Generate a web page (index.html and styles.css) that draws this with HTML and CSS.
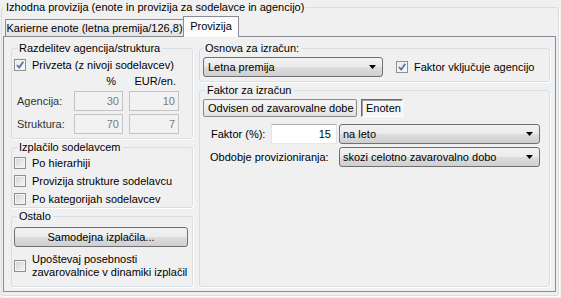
FILE: index.html
```html
<!DOCTYPE html>
<html lang="sl">
<head>
    <meta charset="UTF-8">
    <title>Izhodna provizija</title>
    <link rel="stylesheet" href="styles.css">
</head>
<body>
    <fieldset class="group outer">
        <legend>Izhodna provizija (enote in provizija za sodelavce in agencijo)</legend>
        <div class="tabctl">
            <div class="tabstrip">
                <div class="tab">Karierne enote (letna premija/126,8)</div>
                <div class="tab active">Provizija</div>
            </div>
            <div class="tabpage">
                <div class="col left">
                    <fieldset class="group split">
                        <legend>Razdelitev agencija/struktura</legend>
                        <div class="cbrow">
                            <span class="cb on"><svg viewBox="0 0 10 10" width="10" height="10"><path d="M2 5l2.2 2.6L8.3 1.8" fill="none" stroke="#5a6ea5" stroke-width="1.7"/></svg></span>
                            Privzeta (z nivoji sodelavcev)
                        </div>
                        <div class="grid">
                            <span></span>
                            <span class="head pct">%</span>
                            <span class="head eur">EUR/en.</span>
                            <span class="lbl">Agencija:</span>
                            <div class="edit dis">30</div>
                            <div class="edit dis">10</div>
                            <span class="lbl">Struktura:</span>
                            <div class="edit dis">70</div>
                            <div class="edit dis">7</div>
                        </div>
                    </fieldset>
                    <fieldset class="group payout">
                        <legend>Izplačilo sodelavcem</legend>
                        <div class="cbrow"><span class="cb"></span>Po hierarhiji</div>
                        <div class="cbrow"><span class="cb"></span>Provizija strukture sodelavcu</div>
                        <div class="cbrow"><span class="cb"></span>Po kategorijah sodelavcev</div>
                    </fieldset>
                    <fieldset class="group other">
                        <legend>Ostalo</legend>
                        <div class="button">Samodejna izplačila...</div>
                        <div class="cbrow multi">
                            <span class="cb"></span>
                            <span>Upoštevaj posebnosti<br>zavarovalnice v dinamiki izplačil</span>
                        </div>
                    </fieldset>
                </div>
                <div class="col right">
                    <fieldset class="group basis">
                        <legend>Osnova za izračun:</legend>
                        <div class="basis-row">
                            <div class="combo wide">
                                <span>Letna premija</span>
                                <svg width="7" height="4" viewBox="0 0 7 4"><path d="M0 0h7L3.5 4z"/></svg>
                            </div>
                            <div class="cbrow">
                                <span class="cb on"><svg viewBox="0 0 10 10" width="10" height="10"><path d="M2 5l2.2 2.6L8.3 1.8" fill="none" stroke="#5a6ea5" stroke-width="1.7"/></svg></span>
                                Faktor vključuje agencijo
                            </div>
                        </div>
                    </fieldset>
                    <fieldset class="group factor">
                        <legend>Faktor za izračun</legend>
                        <div class="btabs">
                            <div class="btab">Odvisen od zavarovalne dobe</div>
                            <div class="btab on">Enoten</div>
                        </div>
                        <div class="form">
                            <span class="flbl">Faktor (%):</span>
                            <div class="edit num">15</div>
                            <div class="combo">
                                <span>na leto</span>
                                <svg width="7" height="4" viewBox="0 0 7 4"><path d="M0 0h7L3.5 4z"/></svg>
                            </div>
                            <span class="flbl span2">Obdobje provizioniranja:</span>
                            <div class="combo">
                                <span>skozi celotno zavarovalno dobo</span>
                                <svg width="7" height="4" viewBox="0 0 7 4"><path d="M0 0h7L3.5 4z"/></svg>
                            </div>
                        </div>
                    </fieldset>
                </div>
            </div>
        </div>
    </fieldset>
</body>
</html>
```

FILE: styles.css
```css
* {
    box-sizing: border-box;
}
body {
    margin: 0;
    width: 561px;
    height: 298px;
    overflow: hidden;
    background: #f0f0f0;
    font: 11px/14px "Liberation Sans", Arial, sans-serif;
    color: #000;
}
.group {
    margin: 0;
    padding: 0 0 0 2px;
    min-width: 0;
    border: 1px solid #d5dfe5;
    border-radius: 3px;
    box-shadow: 1px 1px 0 #fff;
}
.group legend {
    padding: 0 2px;
    margin-left: 3px;
    line-height: 14px;
}

/* outer frame */
.outer {
    margin: 0 2px 0 1px;
    height: 296px;
    padding: 2px 2px 3px 1px;
}
.outer > legend {
    margin-left: 1px;
}
.tabctl {
    display: flex;
    flex-direction: column;
    height: 276px;
}
.tabstrip {
    display: flex;
    align-items: flex-end;
    height: 20px;
    padding-left: 2px;
    position: relative;
    z-index: 1;
}
.tab {
    width: 179px;
    height: 17px;
    border: 1px solid #898c95;
    border-bottom: 0;
    background: linear-gradient(#f4f4f4, #e3e3e3);
    text-align: center;
    line-height: 16px;
    white-space: nowrap;
}
.tab.active {
    width: 56px;
    height: 21px;
    margin-left: -1px;
    margin-bottom: -1px;
    padding-top: 2px;
    line-height: 14px;
    background: #fcfcfc;
}
.tabpage {
    flex: 1;
    display: flex;
    gap: 6px;
    padding: 4px 5px 4px 7px;
    border: 1px solid #898c95;
    background: #f0f0f0;
}
.col {
    display: flex;
    flex-direction: column;
    gap: 1px;
}
.left {
    width: 182px;
}
.right {
    flex: 1;
}

/* checkboxes */
.cbrow {
    display: flex;
    align-items: center;
    height: 15px;
    white-space: nowrap;
}
.cb {
    flex: none;
    display: flex;
    align-items: center;
    justify-content: center;
    width: 12px;
    height: 12px;
    margin-right: 6px;
    border: 1px solid #8e8f8f;
    background: linear-gradient(135deg, #cfd3d8, #f7f7f7);
    box-shadow: inset 0 0 0 1px #f4f4f4;
}
.cb.on {
    background: linear-gradient(135deg, #e4e6ea, #fbfbfb);
}

/* split box */
.split {
    height: 98px;
    padding-top: 2px;
}
.grid {
    display: grid;
    grid-template-columns: 54px 49px 50px;
    grid-template-rows: 14px 20px 20px;
    column-gap: 6px;
    row-gap: 3px;
    align-items: center;
    margin-top: 2px;
}
.head {
    text-align: right;
}
.pct {
    padding-right: 7px;
}
.eur {
    padding-right: 3px;
}
.lbl {
    padding-left: 3px;
    color: #333;
}
.edit {
    height: 20px;
    line-height: 18px;
    text-align: right;
    padding-right: 3px;
    border: 1px solid #c2c5c8;
    background: #f2f2f2;
}
.edit.dis {
    color: #7a7a7a;
}

/* payout */
.payout {
    height: 68px;
    padding-top: 2px;
}
.payout .cbrow {
    height: 14px;
    margin-bottom: 4px;
}

/* other */
.other {
    height: 78px;
}
.button {
    width: 174px;
    height: 20px;
    margin-top: 4px;
    line-height: 18px;
    text-align: center;
    border: 1px solid #707070;
    border-radius: 3px;
    background: linear-gradient(#f2f2f2 0%, #ebebeb 50%, #dddddd 50%, #cfcfcf 100%);
}
.cbrow.multi {
    height: auto;
    margin-top: 6px;
    line-height: 13px;
    white-space: normal;
}

/* right column */
.basis {
    height: 41px;
    padding: 2px 0 0 3px;
}
.basis legend {
    margin-left: 0;
}
.basis-row {
    display: flex;
    align-items: center;
    gap: 13px;
}
.combo {
    display: flex;
    align-items: center;
    justify-content: space-between;
    height: 20px;
    padding: 0 6px 0 3px;
    border: 1px solid #707070;
    border-radius: 3px;
    background: linear-gradient(#f2f2f2 0%, #ebebeb 50%, #dddddd 50%, #cfcfcf 100%);
    white-space: nowrap;
}
.combo.wide {
    width: 180px;
    padding-left: 4px;
}
.factor {
    height: 204px;
    padding-left: 3px;
}
.factor legend {
    margin-left: 2px;
}
.btabs {
    display: flex;
    gap: 4px;
    margin-top: 2px;
}
.btab {
    height: 18px;
    line-height: 16px;
    padding: 0 4px;
    border: 1px solid #8a8a8a;
    border-radius: 2px;
    background: linear-gradient(#f6f6f6, #e1e1e1);
    white-space: nowrap;
}
.btab:first-child {
    width: 154px;
}
.btab.on {
    width: 42px;
    border-radius: 0;
    border-color: #6b6b6b #ffffff #ffffff #6b6b6b;
    box-shadow: inset 1px 1px 0 #a0a0a0;
    background: #f5f5f5;
}
.form {
    display: grid;
    grid-template-columns: 68px 68px 201px;
    grid-template-rows: 20px 20px;
    row-gap: 3px;
    align-items: center;
    margin-top: 7px;
}
.flbl {
    padding-left: 8px;
    white-space: nowrap;
}
.flbl.span2 {
    grid-column: span 2;
    padding-left: 7px;
}
.edit.num {
    width: 66px;
    padding-right: 5px;
    background: #fff;
    border-color: #abadb3 #e2e3ea #e3e9ef #e2e3ea;
}
```
